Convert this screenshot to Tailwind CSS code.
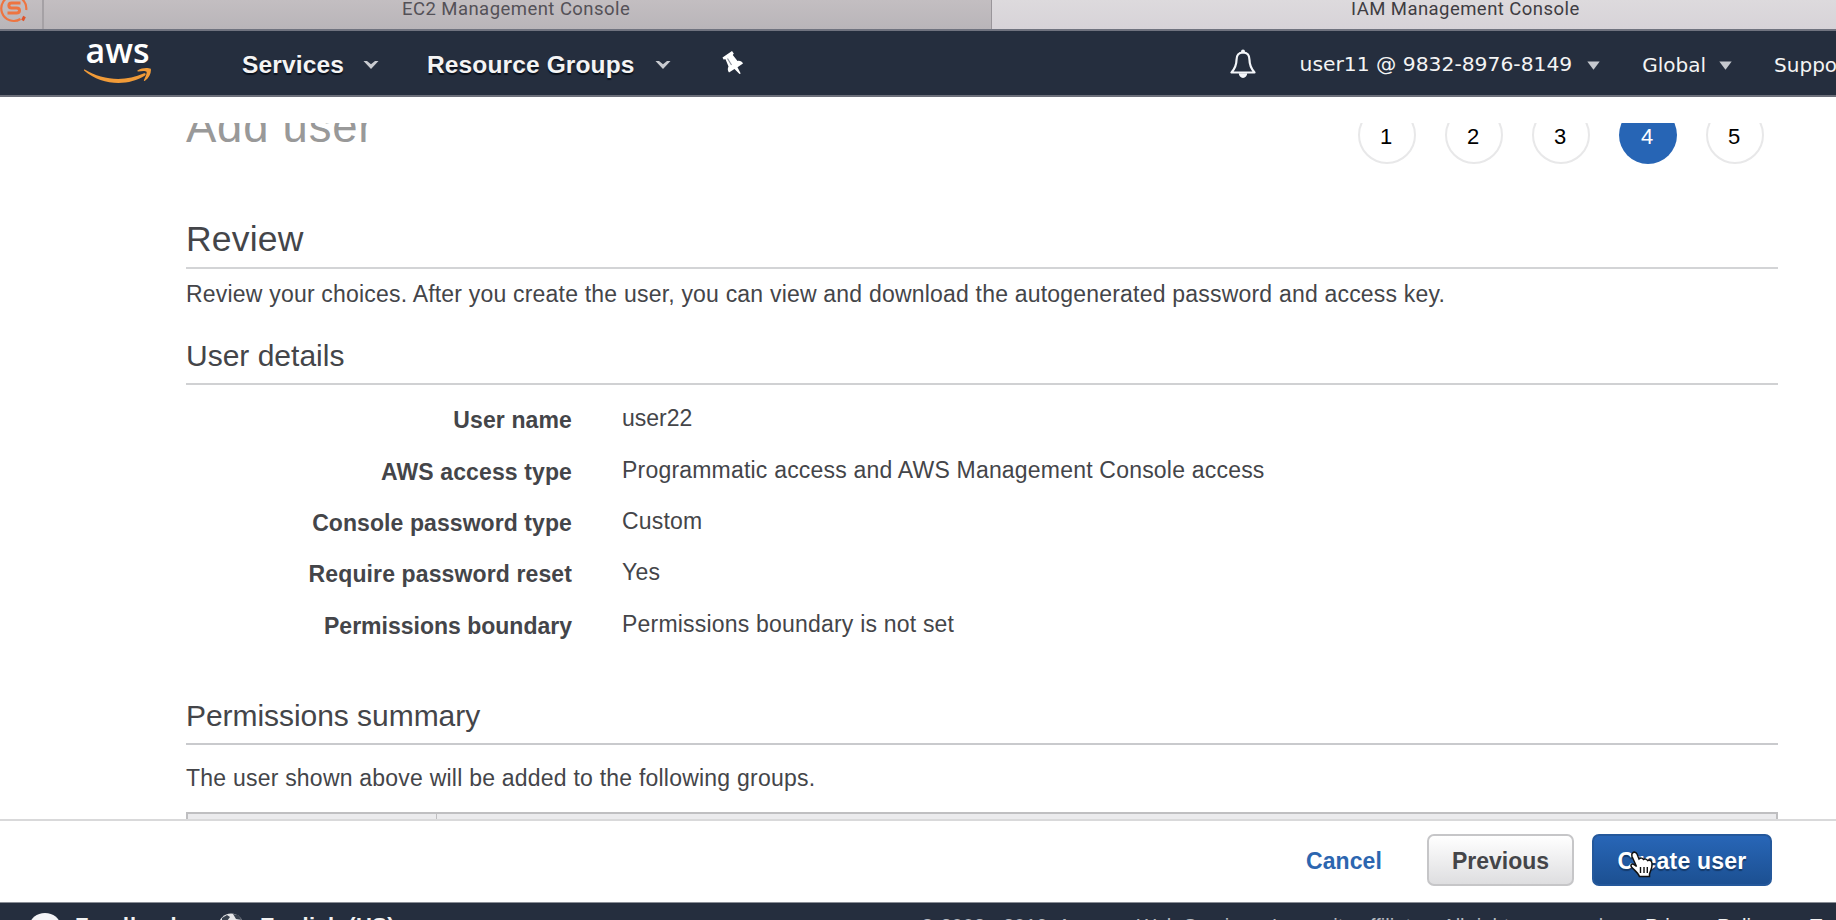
<!DOCTYPE html>
<html lang="en">
<head>
<meta charset="utf-8">
<title>IAM Management Console</title>
<script src="https://cdn.jsdelivr.net/npm/@tailwindcss/browser@4"></script>
</head>
<body class="bg-white">
<div class="flex h-[920px] w-[1836px] flex-col overflow-hidden bg-white font-['Liberation_Sans',sans-serif] text-[23px] text-[#444549]">

  <!-- browser tabs -->
  <div class="flex h-[31px] shrink-0 border-b-2 border-[#70737f] bg-linear-to-b from-[#c3bec1] to-[#b9b5b9] font-[Roboto,sans-serif] text-[18.5px] leading-[20px] tracking-[.45px]">
    <div class="w-[44px] shrink-0 border-r-2 border-[#a5a1a5]">
      <svg class="block" width="42" height="29" viewBox="0 0 42 29" fill="none">
        <path d="M20.5 19A12.500 12.500 0 1 1 26.200 10" stroke="#ee7440" stroke-width="2.200"/>
        <path d="M20.500 3H11.500C8 3 8 8 11.500 8H16.500C20.500 8 20.500 13 16.500 13H7.500" stroke="#ee7440" stroke-width="3"/>
        <path d="M24.500 16.500l-2 4" stroke="#e0552c" stroke-width="3"/>
      </svg>
    </div>
    <div class="w-[948px] shrink-0 border-r border-[#99959a] pl-[358px] text-[#545157]"><span class="inline-block -translate-y-[1px] whitespace-nowrap">EC2 Management Console</span></div>
    <div class="grow bg-linear-to-b from-[#dddadd] to-[#d7d3d8] pl-[359px] text-[#3f3d42]"><span class="inline-block -translate-y-[1px] whitespace-nowrap">IAM Management Console</span></div>
  </div>

  <!-- navigation bar -->
  <nav class="flex h-[66px] shrink-0 items-center border-b-2 border-[#6c6f7a] bg-[#252e3e] pt-[4px] whitespace-nowrap text-[#f4f4f4]">
    <div class="ml-[83px] flex h-full w-[69px] shrink-0 flex-col items-center">
      <div class="-mt-[3px] font-['Open_Sans',sans-serif] text-[34px] leading-[36px] font-semibold text-white">aws</div>
      <svg class="mt-0 block shrink-0" width="69" height="17" viewBox="0 0 69 17">
        <path d="M1.300 1.200C20 13 43 13.500 60.500 5.500C62.300 4.800 63.500 6.300 62 7.500C45 18.500 19 17.800 1 2.500Z" fill="#f19b38"/>
        <path d="M54.500 2.600C59 -.6 65.500 -.2 67.800 .8C68.500 4 66.500 9.500 62 12.800C61 13.300 60.600 12.800 61 12C62.300 9 64.300 5 63.500 3.700C62.500 2.500 58.500 3 55.300 3.400C54.300 3.500 54 3 54.500 2.600Z" fill="#f19b38"/>
      </svg>
    </div>
    <span class="ml-[90px] text-[24.500px] font-bold tracking-[.15px] [text-shadow:0_2px_1px_#0b111c]">Services</span>
    <svg class="ml-[19px] shrink-0" width="16" height="10" viewBox="0 0 16 10"><path d="M.5 1L4 1L8 4.300L12 1L15.500 1L8 9Z" fill="#c9cbd0"/></svg>
    <span class="ml-[48px] text-[24.500px] font-bold tracking-[.13px] [text-shadow:0_2px_1px_#0b111c]">Resource Groups</span>
    <svg class="ml-[20px] shrink-0" width="16" height="10" viewBox="0 0 16 10"><path d="M.5 1L4 1L8 4.300L12 1L15.500 1L8 9Z" fill="#c9cbd0"/></svg>
    <svg class="mb-[4px] ml-[51px] shrink-0" width="22" height="24" viewBox="0 0 22 24"><path d="M.5 6.500L10 0L11.800 2.500L10.800 4L15.500 10C18 9.500 20 10.500 21 12.500L15.500 16.200L18.700 22.500L17.500 23L12.500 18L7 21.500C5.500 19.500 5.500 17.500 6.500 15.500L3.500 8.300L1.500 8.500Z" fill="#fff"/><path d="M5.500 7.500l4 6.500" stroke="#8b919c" stroke-width="1.200"/></svg>
    <svg class="mb-[2px] ml-[486px] shrink-0" width="26" height="30" viewBox="0 0 26 30"><circle cx="13" cy="2.500" r="2" fill="#f4f6fa"/><path d="M13 3.500C8.500 3.500 6.500 6.500 6.500 11C6.500 17 4.500 20 1.500 23.500H24.500C21.500 20 19.500 17 19.500 11C19.500 6.500 17.500 3.500 13 3.500Z" fill="none" stroke="#f4f6fa" stroke-width="2.200" stroke-linejoin="round"/><path d="M8.800 24.300h8.400a4.200 4.700 0 0 1-8.400 0Z" fill="#f4f6fa"/></svg>
    <span class="mb-[1px] ml-[44px] w-[275px] font-['DejaVu_Sans',sans-serif] text-[20.300px]">user11 @ 9832-8976-8149</span>
    <svg class="ml-[15px] shrink-0" width="13" height="9" viewBox="0 0 13 9"><path d="M.3 .5H12.700L6.500 8.800Z" fill="#c5c8ce"/></svg>
    <span class="mb-[1px] ml-[42px] w-[65px] font-['DejaVu_Sans',sans-serif] text-[20px]">Global</span>
    <svg class="ml-[13px] shrink-0" width="13" height="9" viewBox="0 0 13 9"><path d="M.3 .5H12.700L6.500 8.800Z" fill="#c5c8ce"/></svg>
    <span class="mb-[1px] ml-[42px] font-['DejaVu_Sans',sans-serif] text-[20px]">Support</span>
  </nav>

  <!-- scrolled wizard page -->
  <main class="mt-[26px] h-[696px] shrink-0 overflow-hidden">
    <div class="-mt-[23px] ml-[186px] w-[1592px] whitespace-nowrap">
      <header class="flex h-[70px] items-center justify-between">
        <h1 class="mb-[16px] text-[45.500px] leading-[50px] tracking-[.75px] text-[#999]">Add user</h1>
        <ol class="mr-[14px] flex gap-[29px] text-[22px] text-black">
          <li class="flex size-[58px] items-center justify-center rounded-full border-2 border-[#e8e8e9] pt-[2px] pr-[2px]">1</li>
          <li class="flex size-[58px] items-center justify-center rounded-full border-2 border-[#e8e8e9] pt-[2px] pr-[2px]">2</li>
          <li class="flex size-[58px] items-center justify-center rounded-full border-2 border-[#e8e8e9] pt-[2px] pr-[2px]">3</li>
          <li class="flex size-[58px] items-center justify-center rounded-full bg-[#2765b5] pt-[2px] pr-[2px] text-white">4</li>
          <li class="flex size-[58px] items-center justify-center rounded-full border-2 border-[#e8e8e9] pt-[2px] pr-[2px]">5</li>
        </ol>
      </header>

      <h2 class="border-b-2 border-[#d3d4d6] pt-[49px] pb-[8px] text-[35.500px] leading-[40px] tracking-[.2px]">Review</h2>
      <p class="mt-[10px] leading-[30px] tracking-[.2px]">Review your choices. After you create the user, you can view and download the autogenerated password and access key.</p>

      <h3 class="mt-[29px] border-b-2 border-[#d0d1d3] pb-[9px] text-[30px] leading-[36px]">User details</h3>
      <dl class="mt-[8px] grid auto-rows-[51.400px] grid-cols-[386px_1fr] items-center gap-x-[50px] leading-[30px] tracking-[.2px]">
        <dt class="pt-[3px] text-right font-bold tracking-[.12px]">User name</dt><dd class="pb-[1px] tracking-normal">user22</dd>
        <dt class="pt-[3px] text-right font-bold tracking-[.12px]">AWS access type</dt><dd class="pb-[1px]">Programmatic access and AWS Management Console access</dd>
        <dt class="pt-[3px] text-right font-bold tracking-[.08px]">Console password type</dt><dd class="pb-[1px]">Custom</dd>
        <dt class="pt-[3px] text-right font-bold tracking-[.12px]">Require password reset</dt><dd class="pb-[1px]">Yes</dd>
        <dt class="pt-[3px] text-right font-bold tracking-normal">Permissions boundary</dt><dd class="pb-[1px]">Permissions boundary is not set</dd>
      </dl>

      <h3 class="mt-[48px] border-b-2 border-[#c9cacd] pb-[9px] text-[30px] leading-[36px] tracking-[-.05px]">Permissions summary</h3>
      <p class="mt-[18px] leading-[30px] tracking-[.22px]">The user shown above will be added to the following groups.</p>
      <div class="mt-[19px] grid h-[40px] grid-cols-[249px_1fr] border-2 border-[#bfbfc1] bg-[#ebebed]">
        <div class="border-r border-[#bfbfc1]"></div>
        <div></div>
      </div>
    </div>
  </main>

  <!-- wizard actions -->
  <div class="flex h-[83px] shrink-0 items-start justify-end border-t-2 border-[#d9d9da] pt-[13px] pr-[64px] text-[23px] font-bold">
    <a class="mr-[45px] leading-[54px] tracking-[.1px] text-[#2c66b0]">Cancel</a>
    <button class="mr-[18px] h-[52px] w-[147px] rounded-[7px] border-2 border-[#c6c6c8] bg-linear-to-b from-white to-[#dedee0] pt-[2px]">Previous</button>
    <button class="relative h-[52px] w-[180px] rounded-[7px] border-2 border-[#24589b] bg-linear-to-b from-[#2866b7] to-[#1c5092] pt-[2px] tracking-[.2px] text-white [text-shadow:0_2px_1px_#143a6b]">Create user
      <svg class="absolute top-[14px] left-[34px]" width="28" height="30" viewBox="0 0 28 30"><path d="M4.500 3C6 1.500 8 2 9 4L11 9C12.500 7.500 14.500 8 15.500 9.500C17 8.500 18.800 9.200 19.500 10.500C22 9.500 24 11 24 13.500C24.500 18 22.500 20 21.500 24V26.500H11.500C10 22.500 6 20 3.500 17C2 14.500 4 13 6.500 15L8.500 16.500L4 6.500C3.500 5 3.700 4 4.500 3Z" fill="#fff" stroke="#111" stroke-width="1.500"/><path d="M12.500 17v6M16 17v6M19.300 17v6" stroke="#111" stroke-width="1.400"/></svg>
    </button>
  </div>

  <!-- console footer -->
  <footer class="flex h-[18px] shrink-0 items-start overflow-hidden border-t border-[#8a8e96] bg-[#252e3e] pt-[10px] text-[22px] leading-[26px] font-bold whitespace-nowrap text-[#f2f2f2]">
    <svg class="ml-[30px] shrink-0" width="30" height="26" viewBox="0 0 30 26"><ellipse cx="15" cy="12" rx="15" ry="12" fill="#f5f5f7"/></svg>
    <span class="ml-[15px] w-[143px] shrink-0 tracking-[.9px]">Feedback</span>
    <svg class="shrink-0" width="26" height="26" viewBox="0 0 26 26"><circle cx="13" cy="13" r="12.500" fill="#e6e6e8"/><path d="M4 5l5-3 3 2-3 4-5 3zM15 1l5 1 4 5-6-1z" fill="#39424f"/></svg>
    <span class="ml-[16px] w-[660px] shrink-0 tracking-[.35px]">English (US)</span>
    <span class="w-[725px] shrink-0 text-[20.100px] font-normal text-[#b8bbc1]">© 2008 - 2019, Amazon Web Services, Inc. or its affiliates. All rights reserved.</span>
    <span class="w-[165px] shrink-0 text-[20.300px] font-normal">Privacy Policy</span>
    <span class="shrink-0 text-[20.300px] font-normal">Terms of Use</span>
  </footer>
</div>
</body>
</html>
